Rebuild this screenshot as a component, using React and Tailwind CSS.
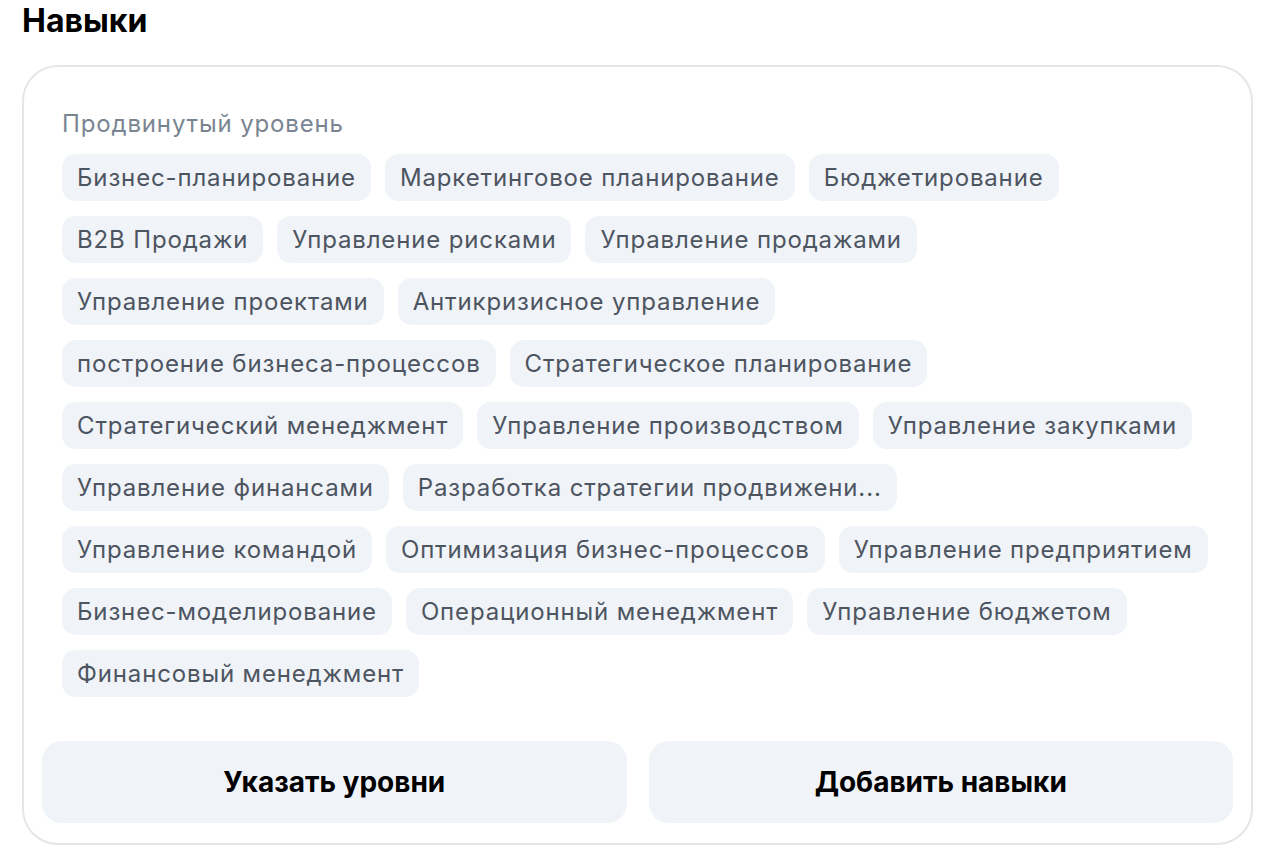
const skills = [
  "Бизнес-планирование",
  "Маркетинговое планирование",
  "Бюджетирование",
  "B2B Продажи",
  "Управление рисками",
  "Управление продажами",
  "Управление проектами",
  "Антикризисное управление",
  "построение бизнеса-процессов",
  "Стратегическое планирование",
  "Стратегический менеджмент",
  "Управление производством",
  "Управление закупками",
  "Управление финансами",
  "Разработка стратегии продвижени...",
  "Управление командой",
  "Оптимизация бизнес-процессов",
  "Управление предприятием",
  "Бизнес-моделирование",
  "Операционный менеджмент",
  "Управление бюджетом",
  "Финансовый менеджмент",
]

export default function App() {
  return (
    <div className="min-h-screen bg-white font-['Inter',sans-serif] pl-[22px] pr-[13px] pt-[2px]">
      <h2 className="text-[32px] leading-[38px] font-bold text-black">Навыки</h2>

      <div className="mt-[25px] border-2 border-[#e4e6ea] rounded-[36px] px-[18px] pt-[41px] pb-[20px]">
        <div className="px-[20px]">
          <p className="text-[24px] leading-[32px] tracking-[0.85px] text-[#7a8592]">Продвинутый уровень</p>
          <div className="mt-[14px] flex flex-wrap gap-x-[14px] gap-y-[15px]">
            {skills.map((s) => (
              <span
                key={s}
                className="h-[47px] flex items-center px-[15px] rounded-[14px] bg-[#f0f3f8] text-[24px] tracking-[0.85px] text-[#4d5561] whitespace-nowrap"
              >
                {s}
              </span>
            ))}
          </div>
        </div>

        <div className="mt-[44px] grid grid-cols-2 gap-[22px]">
          <button className="h-[82px] rounded-[20px] bg-[#f0f3f8] text-[28px] font-bold text-black">
            Указать уровни
          </button>
          <button className="h-[82px] rounded-[20px] bg-[#f0f3f8] text-[28px] font-bold text-black">
            Добавить навыки
          </button>
        </div>
      </div>
    </div>
  )
}
